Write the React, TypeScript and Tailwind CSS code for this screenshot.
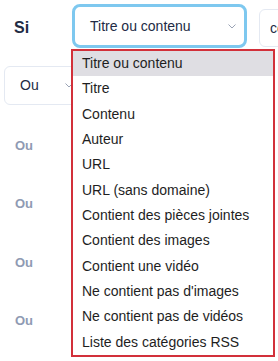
import React from "react";

const items = [
  "Titre ou contenu",
  "Titre",
  "Contenu",
  "Auteur",
  "URL",
  "URL (sans domaine)",
  "Contient des pièces jointes",
  "Contient des images",
  "Contient une vidéo",
  "Ne contient pas d'images",
  "Ne contient pas de vidéos",
  "Liste des catégories RSS",
];

function Chevron() {
  return (
    <svg width="8" height="5" viewBox="0 0 8 5" fill="none">
      <path d="M0.5 0.5 L4 4 L7.5 0.5" stroke="#9aa3b5" strokeWidth="1" />
    </svg>
  );
}

export default function App() {
  return (
    <div
      className="relative w-[278px] h-[361px] overflow-hidden bg-white"
      style={{ fontFamily: '"Liberation Sans", Arial, sans-serif' }}
    >
      <div className="flex items-start w-[400px]">
        <div className="w-[72px] pl-[14px] pt-[18px] text-[16px] font-bold text-[#222b45] leading-[20px]">
          Si
        </div>
        <div className="mt-[4px] w-[175px] h-[44px] border-[3px] border-[#7ec8ef] rounded-[8px] flex items-center justify-between pl-[15px] pr-[8px] text-[14px] text-[#222b45] shrink-0">
          <span>Titre ou contenu</span>
          <Chevron />
        </div>
        <div className="mt-[9px] ml-[12px] w-[120px] h-[38px] border border-[#e4e9f2] rounded-[6px] flex items-center pl-[10px] text-[14px] text-[#222b45] shrink-0">
          <span>contient</span>
        </div>
      </div>

      <div className="mt-[18px] ml-[4px] w-[80px] h-[39px] border border-[#e4e9f2] rounded-[6px] flex items-center justify-between pl-[15px] pr-[10px] text-[14px] text-[#222b45]">
        <span>Ou</span>
        <Chevron />
      </div>

      <div className="flex flex-col pl-[15px] pt-[33px] text-[13px] font-bold text-[#8f9bb3]">
        <div className="h-[58px] leading-[16px]">Ou</div>
        <div className="h-[59px] leading-[16px]">Ou</div>
        <div className="h-[58px] leading-[16px]">Ou</div>
        <div className="h-[58px] leading-[16px]">Ou</div>
      </div>

      <div className="absolute left-[71px] top-[49px] w-[204px] h-[308px] border-2 border-[#d2303a] bg-white flex flex-col">
        {items.map((it, i) => (
          <div
            key={it}
            className={
              "h-[25.33px] flex items-center pl-[9px] text-[14px] text-[#1e1e1e] " +
              (i === 0 ? "bg-[#dfdee3]" : "")
            }
          >
            {it}
          </div>
        ))}
      </div>
    </div>
  );
}
